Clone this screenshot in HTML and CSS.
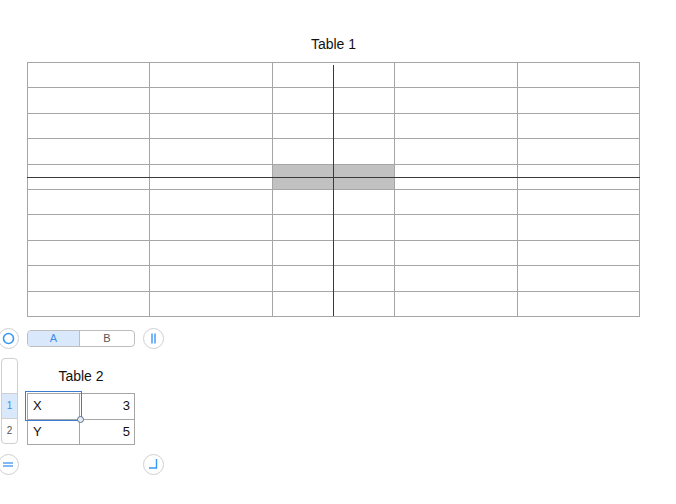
FILE: index.html
```html
<!DOCTYPE html>
<html>
<head>
<meta charset="utf-8">
<link rel="stylesheet" href="styles.css">
</head>
<body>
<div class="page">
  <div class="title1">Table 1</div>
  <div class="t1">
    <div></div><div></div><div></div><div></div><div></div>
    <div></div><div></div><div></div><div></div><div></div>
    <div></div><div></div><div></div><div></div><div></div>
    <div></div><div></div><div></div><div></div><div></div>
    <div></div><div></div><div class="hl"></div><div></div><div></div>
    <div></div><div></div><div></div><div></div><div></div>
    <div></div><div></div><div></div><div></div><div></div>
    <div></div><div></div><div></div><div></div><div></div>
    <div></div><div></div><div></div><div></div><div></div>
    <div></div><div></div><div></div><div></div><div></div>
    <span class="vline"></span>
    <span class="hline"></span>
  </div>

  <div class="ctrl">
    <div class="cbtn first">
      <svg width="21" height="21" viewBox="0 0 21 21"><circle cx="10.5" cy="10.5" r="5" fill="none" stroke="#3a97f5" stroke-width="1.6"/></svg>
    </div>
    <div class="seg">
      <div class="seg-a">A</div>
      <div class="seg-b">B</div>
    </div>
    <div class="cbtn pause">
      <svg width="21" height="21" viewBox="0 0 21 21"><line x1="9" y1="5.5" x2="9" y2="15.5" stroke="#3a97f5" stroke-width="1.4"/><line x1="12" y1="5.5" x2="12" y2="15.5" stroke="#3a97f5" stroke-width="1.4"/></svg>
    </div>
  </div>

  <div class="sec2">
    <div class="rowbar">
      <div class="rb-top"></div>
      <div class="rb-row sel">1</div>
      <div class="rb-row">2</div>
    </div>
    <div class="t2wrap">
      <div class="title2">Table 2</div>
      <div class="t2">
        <div class="c l">X</div><div class="c r">3</div>
        <div class="c l">Y</div><div class="c r">5</div>
        <span class="selbox"></span>
        <span class="handle"></span>
      </div>
    </div>
  </div>

  <div class="bottom">
    <div class="cbtn first">
      <svg width="21" height="21" viewBox="0 0 21 21"><line x1="5" y1="9" x2="15" y2="9" stroke="#3a97f5" stroke-width="1.3"/><line x1="5" y1="12" x2="15" y2="12" stroke="#3a97f5" stroke-width="1.3"/></svg>
    </div>
    <div class="cbtn corner">
      <svg width="21" height="21" viewBox="0 0 21 21"><polyline points="13.5,5 13.5,14 6,14" fill="none" stroke="#3a97f5" stroke-width="1.4"/></svg>
    </div>
  </div>
</div>
</body>
</html>
```

FILE: styles.css
```css
html, body {
  margin: 0;
  padding: 0;
  background: #ffffff;
}
body {
  width: 676px;
  height: 504px;
  overflow: hidden;
  font-family: "Liberation Sans", Arial, Helvetica, sans-serif;
  color: #111;
}
.page {
  padding-top: 36px;
}
.title1 {
  margin-left: 27px;
  width: 613px;
  text-align: center;
  font-size: 14px;
  line-height: 17px;
  height: 17px;
  margin-bottom: 9px;
}
.t1 {
  position: relative;
  margin-left: 27px;
  width: 613px;
  height: 255px;
  box-sizing: border-box;
  padding: 1px;
  display: grid;
  grid-template-columns: repeat(5, 1fr);
  grid-template-rows: repeat(10, 1fr);
  gap: 1px;
  background: #a6a6a6;
}
.t1 > div {
  background: #ffffff;
}
.t1 > div.hl {
  background: #c1c1c1;
}
.vline {
  position: absolute;
  left: 306px;
  top: 3px;
  bottom: 1px;
  width: 1px;
  background: #3a3a3a;
}
.hline {
  position: absolute;
  left: 0;
  right: 0;
  top: 115px;
  height: 1px;
  background: #3a3a3a;
}
.ctrl {
  display: flex;
  align-items: center;
  height: 21px;
  margin-top: 11px;
}
.cbtn {
  width: 21px;
  height: 21px;
  box-sizing: border-box;
  border: 1px solid #cfcfcf;
  border-radius: 50%;
  background: #fff;
  display: flex;
  align-items: center;
  justify-content: center;
}
.cbtn svg {
  display: block;
  flex: none;
}
.cbtn.first {
  margin-left: -2px;
}
.seg {
  margin-left: 8px;
  width: 108px;
  height: 17px;
  box-sizing: border-box;
  border: 1px solid #bdbdbd;
  border-radius: 4px;
  display: flex;
  overflow: hidden;
  font-size: 11px;
}
.seg-a {
  width: 51px;
  background: #dae8fb;
  color: #3a8ee9;
  border-right: 1px solid #bdbdbd;
  text-align: center;
  line-height: 15px;
}
.seg-b {
  flex: 1;
  color: #555;
  text-align: center;
  line-height: 15px;
}
.cbtn.pause {
  margin-left: 8px;
}
.sec2 {
  display: flex;
  align-items: flex-start;
  margin-top: 9px;
}
.rowbar {
  margin-left: 1px;
  width: 17px;
  height: 86px;
  box-sizing: border-box;
  border: 1px solid #cfcfcf;
  border-radius: 4px;
  overflow: hidden;
  display: flex;
  flex-direction: column;
  font-size: 10px;
}
.rb-top {
  height: 35px;
}
.rb-row {
  height: 24px;
  border-top: 1px solid #cfcfcf;
  text-align: center;
  line-height: 24px;
  color: #555;
}
.rb-row.sel {
  background: #dae8fb;
  color: #3a8ee9;
}
.t2wrap {
  margin-left: 9px;
  width: 108px;
}
.title2 {
  margin-top: 10px;
  height: 17px;
  line-height: 17px;
  font-size: 14px;
  text-align: center;
  margin-bottom: 8px;
}
.t2 {
  position: relative;
  width: 108px;
  height: 52px;
  box-sizing: border-box;
  padding: 1px;
  display: grid;
  grid-template-columns: 51px 1fr;
  grid-template-rows: 25px 24px;
  gap: 1px;
  background: #a6a6a6;
}
.c {
  background: #fff;
  font-size: 13px;
  line-height: 24px;
  height: 100%;
  overflow: hidden;
  color: #111;
}
.c.l {
  padding-left: 5px;
}
.c.r {
  text-align: right;
  padding-right: 4px;
}
.selbox {
  position: absolute;
  left: -2px;
  top: -2px;
  width: 57px;
  height: 30px;
  box-sizing: border-box;
  border: 1px solid #3b7dd0;
}
.handle {
  position: absolute;
  left: 50px;
  top: 23px;
  width: 7px;
  height: 7px;
  box-sizing: border-box;
  border: 1px solid #5a7090;
  border-radius: 50%;
  background: #e6ecf5;
}
.bottom {
  display: flex;
  align-items: center;
  margin-top: 9px;
}
.cbtn.corner {
  margin-left: 124px;
}
```
